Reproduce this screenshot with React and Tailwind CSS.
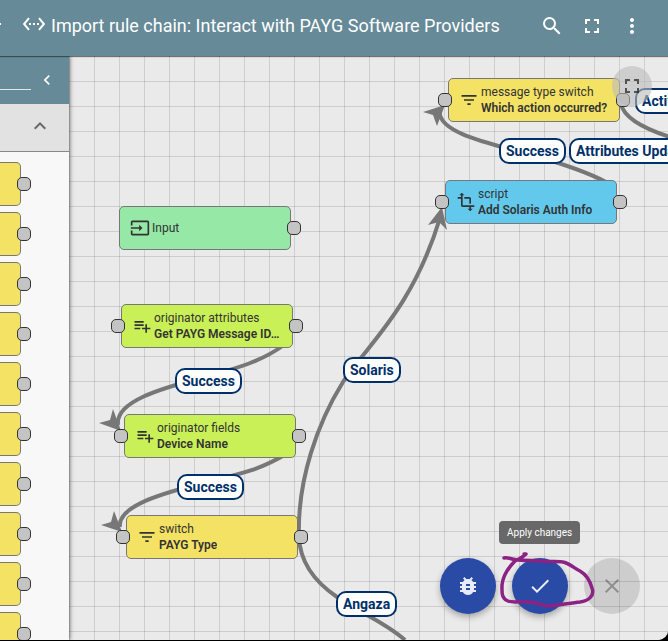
import React from "react";
import {
  MdSearch,
  MdFullscreen,
  MdMoreVert,
  MdSettingsEthernet,
  MdChevronLeft,
  MdExpandLess,
  MdFilterList,
  MdPlaylistAdd,
  MdTransform,
  MdInput,
  MdBugReport,
  MdDone,
  MdClose,
} from "react-icons/md";

const NODES = [
  { title: "Input", icon: MdInput, fill: "bg-[#95e8a6]", place: "left-[50px] top-[150px]", output: true },
  { title: "originator attributes", name: "Get PAYG Message ID…", icon: MdPlaylistAdd, fill: "bg-[#caf058]", place: "left-[52px] top-[248px]", input: true, output: true },
  { title: "originator fields", name: "Device Name", icon: MdPlaylistAdd, fill: "bg-[#caf058]", place: "left-[55px] top-[358px]", input: true, output: true },
  { title: "switch", name: "PAYG Type", icon: MdFilterList, fill: "bg-[#f4e264]", place: "left-[57px] top-[459px]", input: true, output: true },
  { title: "script", name: "Add Solaris Auth Info", icon: MdTransform, fill: "bg-[#62c9ed]", place: "left-[376px] top-[124px]", input: true, output: true },
  { title: "message type switch", name: "Which action occurred?", icon: MdFilterList, fill: "bg-[#f4e264]", place: "left-[379px] top-[22px]", input: true, output: true },
];

const LABELS = [
  { text: "Success", place: "left-[430px] top-[82px]" },
  { text: "Attributes Updated", place: "left-[500px] top-[82px]" },
  { text: "Activity", place: "left-[566px] top-[32px]" },
  { text: "Success", place: "left-[106px] top-[312px]" },
  { text: "Success", place: "left-[108px] top-[418px]" },
  { text: "Solaris", place: "left-[274px] top-[301px]" },
  { text: "Angaza", place: "left-[267px] top-[535px]" },
];

const PALETTE = [0, 1, 2, 3, 4, 5, 6, 7, 8, 9];

function Port({ className }) {
  return (
    <span className={"absolute top-[14px] size-[14px] rounded-[5px] border border-[#333] bg-[#c4c4c4] " + className} />
  );
}

function RuleNode({ node }) {
  const Icon = node.icon;
  return (
    <div
      className={
        "absolute flex h-11 w-[172px] items-center gap-[2px] rounded-[5px] border border-[#777] pr-2 pl-[10px] text-[12px] leading-4 text-[#333] " +
        node.fill + " " + node.place
      }
    >
      <Icon className="size-5 shrink-0" />
      <div className="min-w-0">
        <div className="truncate">{node.title}</div>
        {node.name && <div className="truncate font-semibold">{node.name}</div>}
      </div>
      {node.input && <Port className="-left-[11px]" />}
      {node.output && <Port className="-right-[11px]" />}
    </div>
  );
}

function Edges() {
  return (
    <svg className="absolute top-0 left-0 h-[584px] w-[599px]" viewBox="69 56 599 584" aria-hidden="true">
      <g fill="none" stroke="#777" strokeWidth="4">
        <path d="M284 345 C262 361 238 368 208 376 C158 389 115 402 118 425" />
        <path d="M286 454 C262 469 240 474 211 481 C162 493 117 506 120 527" />
        <path d="M606 182 C585 171 560 163 532 155 C482 142 435 131 440 109" />
        <path d="M299 537 C297 480 318 422 343 382 C366 346 412 310 440 218" />
        <path d="M299 537 C300 565 318 584 337 597 C360 613 385 622 405 640" />
        <path d="M621 104 C624 118 645 129 670 137" />
      </g>
      <g fill="#777">
        <path d="M121 431 L99 423 L110 420 L113 409 Z" />
        <path d="M122 532 L101 525 L111 522 L114 511 Z" />
        <path d="M445 105 L423 112 L433 115 L437 126 Z" />
        <path d="M442 207 L428 225 L439 222 L447 230 Z" />
      </g>
    </svg>
  );
}

function Scribble() {
  return (
    <svg className="pointer-events-none absolute -top-2 left-[56px] h-16 w-[104px]" viewBox="496 550 104 64" aria-hidden="true">
      <path
        d="M504 558 C509 557 512 560 518 560 C530 561 535 560 540 561 C550 562 560 561 563 562 C571 564 575 569 580 571 C587 575 590 581 592 588 C595 596 588 601 580 602 C570 603 560 605 548 606 C540 605 535 602 529 602 C520 601 513 603 508 601 C501 598 502 592 502 585 C503 575 508 568 515 561 C520 558 522 558 526 554 L524 554"
        fill="none"
        stroke="#8c2384"
        strokeWidth="3.5"
        strokeLinecap="round"
        strokeLinejoin="round"
      />
    </svg>
  );
}

export default function App() {
  return (
    <div className="h-screen bg-black pb-px font-[Roboto,sans-serif]">
      <div className="flex h-full flex-col overflow-hidden rounded-br-[10px] bg-[#eaeaea]">
        <header className="relative z-20 flex h-14 shrink-0 items-center bg-[#668a98] pr-6 text-white shadow-[0_1px_1px_rgba(0,0,0,0.45)]">
          <span className="mb-2 h-[2px] w-px bg-white" />
          <MdSettingsEthernet className="mb-2 ml-[21px] size-6 shrink-0" />
          <h1 className="mb-1 ml-[5px] min-w-0 flex-1 truncate text-[18px] leading-6">
            Import rule chain: Interact with PAYG Software Providers
          </h1>
          <div className="mb-1 flex shrink-0 gap-4">
            <button type="button" aria-label="Search"><MdSearch className="size-6" /></button>
            <button type="button" aria-label="Fullscreen"><MdFullscreen className="size-6" /></button>
            <button type="button" aria-label="More"><MdMoreVert className="size-6" /></button>
          </div>
        </header>

        <div className="flex min-h-0 flex-1">
          <aside className="relative z-10 flex w-[69px] shrink-0 flex-col bg-[#f8f8f8] shadow-[1px_0_4px_rgba(0,0,0,0.5)]">
            <div className="flex h-12 shrink-0 items-center justify-between bg-[#668a98] pr-3 text-white">
              <input aria-label="Search nodes" className="h-5 w-[31px] border-b border-white/80 bg-transparent outline-none" />
              <button type="button" aria-label="Collapse library"><MdChevronLeft className="size-5" /></button>
            </div>
            <button type="button" aria-label="Collapse section" className="flex h-12 shrink-0 items-center justify-end border-b border-[#888] bg-[#e2e2e2] pr-[17px] pb-1 text-[#666]">
              <MdExpandLess className="size-6" />
            </button>
            <div className="flex min-h-0 flex-1 flex-col gap-[6px] overflow-hidden pt-[10px]">
              {PALETTE.map((n) => (
                <div key={n} className="relative h-11 w-[21px] shrink-0 rounded-r-[5px] border border-l-0 border-[#777] bg-[#f4e264]">
                  <Port className="-right-[11px]" />
                </div>
              ))}
            </div>
          </aside>

          <main className="relative min-w-0 flex-1 overflow-hidden bg-[#eaeaea] bg-[linear-gradient(to_right,rgba(0,0,0,0.12)_1px,transparent_1px),linear-gradient(to_bottom,rgba(0,0,0,0.12)_1px,transparent_1px)] bg-[size:25px_25px]">
            <Edges />
            {NODES.map((node) => (
              <RuleNode key={node.title} node={node} />
            ))}
            {LABELS.map((label) => (
              <span
                key={label.place}
                className={"absolute rounded-[10px] border-2 border-[#003069] bg-white px-[5px] py-px text-[14px] leading-5 font-bold whitespace-nowrap text-[#003069] " + label.place}
              >
                {label.text}
              </span>
            ))}

            <button type="button" aria-label="Fit to screen" className="absolute top-[10px] right-4 flex size-10 items-center justify-center rounded-full bg-[#bbb]/60 text-black/60">
              <MdFullscreen className="size-6" />
            </button>

            <div className="absolute right-7 bottom-[26px] flex gap-4">
              <button type="button" aria-label="Debug" className="flex size-14 items-center justify-center rounded-full bg-[#294aa5] text-[#e8ecf8] shadow-[0_3px_6px_rgba(0,0,0,0.3)]">
                <MdBugReport className="size-6" />
              </button>
              <button type="button" aria-label="Apply changes" className="flex size-14 items-center justify-center rounded-full bg-[#294aa5] text-[#e8ecf8] shadow-[0_3px_6px_rgba(0,0,0,0.3)]">
                <MdDone className="size-6" />
              </button>
              <button type="button" aria-label="Discard changes" disabled className="flex size-14 items-center justify-center rounded-full bg-black/12 text-black/30">
                <MdClose className="size-6" />
              </button>
              <div role="tooltip" className="absolute -top-[37px] left-[59px] rounded-[4px] bg-[#616161]/95 px-2 py-1 text-[10px] leading-[15px] whitespace-nowrap text-white">
                Apply changes
              </div>
              <Scribble />
            </div>
          </main>
        </div>
      </div>
    </div>
  );
}
